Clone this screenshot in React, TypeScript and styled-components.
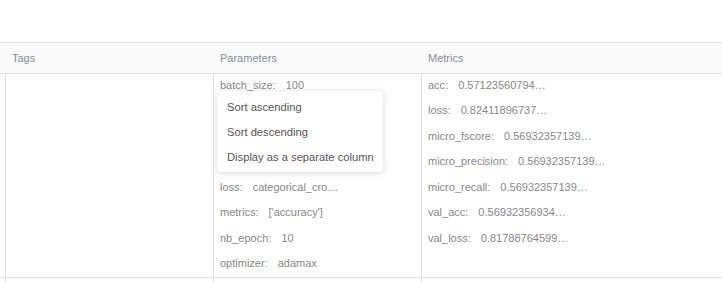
import styled, { createGlobalStyle } from "styled-components";

const GlobalStyle = createGlobalStyle`
  body {
    margin: 0;
    background: #fff;
    font-family: "Liberation Sans", Arial, sans-serif;
  }
`;

const Page = styled.div`
  width: 722px;
  height: 282px;
  overflow: hidden;
  padding-top: 42px;
  box-sizing: border-box;
`;

const Table = styled.div`
  display: grid;
  grid-template-columns: 5px 208px 208px 1fr;
  font-size: 11px;
`;

const HeadCell = styled.div<{ $edge?: boolean }>`
  height: 30px;
  display: flex;
  align-items: center;
  padding-left: ${(p) => (p.$edge ? "0" : "7px")};
  background: #fafafa;
  border-top: 1px solid #e3e3e3;
  border-bottom: 1px solid #e3e3e3;
  color: #878c96;
  white-space: nowrap;
`;

const Cell = styled.div<{ $edge?: boolean }>`
  position: relative;
  height: 203px;
  border-left: ${(p) => (p.$edge ? "none" : "1px solid #e3e3e3")};
  border-bottom: 1px solid #e3e3e3;
  padding-left: ${(p) => (p.$edge ? "0" : "6px")};
`;

const List = styled.div`
  margin-top: -2px;
`;

const Item = styled.div`
  display: flex;
  height: 25.5px;
  align-items: center;
  color: #888;
  white-space: nowrap;
`;

const Key = styled.span``;

const Value = styled.span`
  margin-left: 10px;
  max-width: 90px;
  overflow: hidden;
  text-overflow: ellipsis;
`;

const Menu = styled.div`
  position: absolute;
  left: 3px;
  top: 17px;
  width: 166px;
  padding: 3px 0;
  background: #fff;
  border-radius: 4px;
  box-shadow: 0 1px 6px rgba(0, 0, 0, 0.16);
  z-index: 2;
`;

const MenuItem = styled.div`
  height: 25px;
  display: flex;
  align-items: center;
  padding-left: 10px;
  color: #555;
  font-size: 11.2px;
  white-space: nowrap;
`;

const params: [string, string][] = [
  ["batch_size", "100"],
  ["dropout", "0.2"],
  ["epochs", "10"],
  ["learning_rate", "0.001"],
  ["loss", "categorical_crossentropy"],
  ["metrics", "['accuracy']"],
  ["nb_epoch", "10"],
  ["optimizer", "adamax"],
];

const metrics: [string, string][] = [
  ["acc", "0.5712356079471111"],
  ["loss", "0.8241189673722222"],
  ["micro_fscore", "0.5693235713933333"],
  ["micro_precision", "0.5693235713944444"],
  ["micro_recall", "0.5693235713955555"],
  ["val_acc", "0.5693235693466666"],
  ["val_loss", "0.8178876459977777"],
];

function KeyValues({ rows }: { rows: [string, string][] }) {
  return (
    <List>
      {rows.map(([name, value]) => (
        <Item key={name}>
          <Key>{name}:</Key>
          <Value>{value}</Value>
        </Item>
      ))}
    </List>
  );
}

export default function App(): JSX.Element {
  return (
    <Page>
      <GlobalStyle />
      <Table>
        <HeadCell $edge />
        <HeadCell>Tags</HeadCell>
        <HeadCell>Parameters</HeadCell>
        <HeadCell>Metrics</HeadCell>

        <Cell $edge />
        <Cell />
        <Cell>
          <KeyValues rows={params} />
          <Menu>
            <MenuItem>Sort ascending</MenuItem>
            <MenuItem>Sort descending</MenuItem>
            <MenuItem>Display as a separate column</MenuItem>
          </Menu>
        </Cell>
        <Cell>
          <KeyValues rows={metrics} />
        </Cell>

        <Cell $edge />
        <Cell />
        <Cell />
        <Cell />
      </Table>
    </Page>
  );
}
